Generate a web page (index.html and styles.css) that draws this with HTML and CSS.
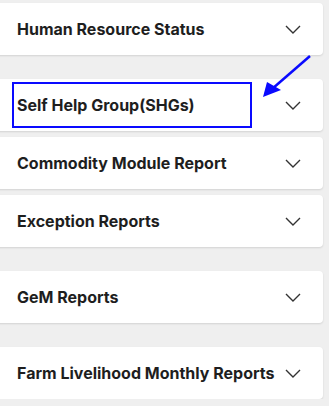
FILE: index.html
```html
<!DOCTYPE html>
<html lang="en">
<head>
  <meta charset="UTF-8">
  <meta name="viewport" content="width=device-width, initial-scale=1.0">
  <title>Reports</title>
  <link rel="stylesheet" href="styles.css">
</head>
<body>
  <div class="list">
    <div class="card">
      <span class="title">Human Resource Status</span>
      <svg class="chev" viewBox="0 0 16 9"><path d="M1 1 L8 8 L15 1"/></svg>
    </div>

    <div class="card spaced marked">
      <span class="title">Self Help Group(SHGs)</span>
      <svg class="chev" viewBox="0 0 16 9"><path d="M1 1 L8 8 L15 1"/></svg>
      <div class="mark"></div>
    </div>

    <div class="card">
      <span class="title">Commodity Module Report</span>
      <svg class="chev" viewBox="0 0 16 9"><path d="M1 1 L8 8 L15 1"/></svg>
    </div>

    <div class="card">
      <span class="title">Exception Reports</span>
      <svg class="chev" viewBox="0 0 16 9"><path d="M1 1 L8 8 L15 1"/></svg>
    </div>

    <div class="card spaced">
      <span class="title">GeM Reports</span>
      <svg class="chev" viewBox="0 0 16 9"><path d="M1 1 L8 8 L15 1"/></svg>
    </div>

    <div class="card spaced">
      <span class="title">Farm Livelihood Monthly Reports</span>
      <svg class="chev" viewBox="0 0 16 9"><path d="M1 1 L8 8 L15 1"/></svg>
    </div>
  </div>

  <!-- annotation arrow -->
  <svg class="arrow" width="329" height="406" viewBox="0 0 329 406">
    <line x1="310" y1="56" x2="272" y2="89" />
    <polygon points="263,97 267,82 281,90" />
  </svg>
</body>
</html>
```

FILE: styles.css
```css
body{
  margin:0;
  background:#efefef;
  font-family:Inter,"Liberation Sans",sans-serif;
  overflow:hidden;
}

.list{
  display:flex;
  flex-direction:column;
  gap:6px;
  padding-top:3px;
  margin-left:-6px;
  width:329px;
}

.card{
  position:relative;
  display:flex;
  align-items:center;
  justify-content:space-between;
  height:52px;
  box-sizing:border-box;
  padding:0 22px 0 23px;
  background:#fff;
  border-radius:4px;
  box-shadow:0 1px 2px rgba(0,0,0,.12);
}

.spaced{
  margin-top:18px;
}

.title{
  font-size:16px;
  font-weight:700;
  color:#1e1e1e;
}

.chev{
  width:16px;
  height:9px;
  flex:none;
}
.chev path{
  fill:none;
  stroke:#333;
  stroke-width:1.4;
}

.mark{
  position:absolute;
  left:18px;
  top:3px;
  width:240px;
  height:46px;
  box-sizing:border-box;
  border:2.5px solid #0a0aff;
}

.arrow{
  position:absolute;
  left:0;
  top:0;
}
.arrow line{
  stroke:#0a0aff;
  stroke-width:2.5;
}
.arrow polygon{
  fill:#0a0aff;
}
```
